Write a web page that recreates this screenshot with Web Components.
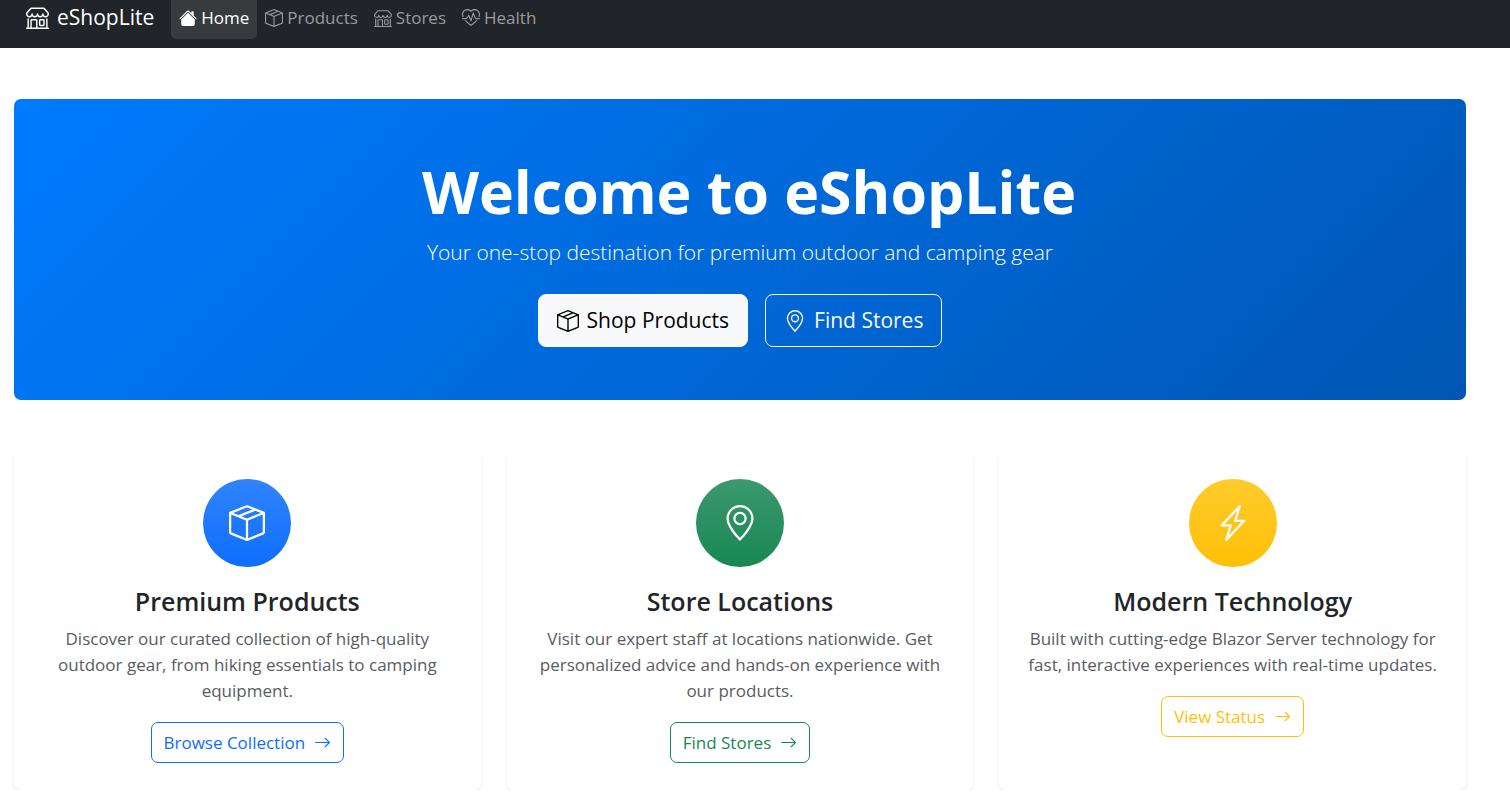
<!DOCTYPE html>
<html lang="en">
<head>
<meta charset="utf-8">
<meta name="viewport" content="width=device-width, initial-scale=1">
<title>eShopLite</title>
<style>
  body {
    margin: 0;
    background: #fff;
    color: #212529;
    font: 17px/26px "Open Sans", "Noto Sans", sans-serif;
  }
  main { padding: 51px 44px 0 14px; }
  .features {
    display: grid;
    grid-template-columns: repeat(auto-fit, minmax(320px, 1fr));
    gap: 26px;
    margin-top: 52px;
  }
</style>
</head>
<body>
<site-header>
  <nav-item href="#home" icon="house" active>Home</nav-item>
  <nav-item href="#products" icon="box">Products</nav-item>
  <nav-item href="#stores" icon="shop">Stores</nav-item>
  <nav-item href="#health" icon="pulse">Health</nav-item>
</site-header>
<main>
  <hero-banner>
    <span slot="title">Welcome to eShopLite</span>
    <span slot="lead">Your one-stop destination for premium outdoor and camping gear</span>
    <hero-button slot="actions" href="#products" icon="box" kind="solid">Shop Products</hero-button>
    <hero-button slot="actions" href="#stores" icon="pin">Find Stores</hero-button>
  </hero-banner>
  <section class="features">
    <feature-card icon="box" tone="primary" href="#products">
      <span slot="title">Premium Products</span>
      Discover our curated collection of high-quality outdoor gear, from hiking essentials to camping equipment.
      <span slot="action">Browse Collection</span>
    </feature-card>
    <feature-card icon="pin" tone="success" href="#stores">
      <span slot="title">Store Locations</span>
      Visit our expert staff at locations nationwide. Get personalized advice and hands-on experience with our products.
      <span slot="action">Find Stores</span>
    </feature-card>
    <feature-card icon="bolt" tone="warning" href="#health">
      <span slot="title">Modern Technology</span>
      Built with cutting-edge Blazor Server technology for fast, interactive experiences with real-time updates.
      <span slot="action">View Status</span>
    </feature-card>
  </section>
</main>
<script>
const ICONS = {
  house: ['M8.707 1.5a1 1 0 0 0-1.414 0L.646 8.146a.5.5 0 0 0 .708.708L8 2.207l6.646 6.647a.5.5 0 0 0 .708-.708L13 5.793V2.5a.5.5 0 0 0-.5-.5h-1a.5.5 0 0 0-.5.5v1.293z', 'm8 3.293 6 6V13.5a1.5 1.5 0 0 1-1.5 1.5h-9A1.5 1.5 0 0 1 2 13.5V9.293z'],
  box: ['M8.186 1.113a.5.5 0 0 0-.372 0L1.846 3.5l2.404.961L10.404 2zm3.564 1.426L5.596 5 8 5.961 14.154 3.5zm3.25 1.7-6.5 2.6v7.922l6.5-2.6V4.24zM7.5 14.762V6.838L1 4.239v7.923zM7.443.184a1.5 1.5 0 0 1 1.114 0l7.129 2.852A.5.5 0 0 1 16 3.5v8.662a1 1 0 0 1-.629.928l-7.185 2.874a.5.5 0 0 1-.372 0L.63 13.09a1 1 0 0 1-.63-.928V3.5a.5.5 0 0 1 .314-.464z'],
  shop: ['M2.97 1.35A1 1 0 0 1 3.73 1h8.54a1 1 0 0 1 .76.35l2.609 3.044A1.5 1.5 0 0 1 16 5.37v.255a2.375 2.375 0 0 1-4.25 1.458A2.37 2.37 0 0 1 9.875 8 2.37 2.37 0 0 1 8 7.083 2.37 2.37 0 0 1 6.125 8a2.37 2.37 0 0 1-1.875-.917A2.375 2.375 0 0 1 0 5.625V5.37a1.5 1.5 0 0 1 .361-.976zm1.78 4.275a1.375 1.375 0 0 0 2.75 0 .5.5 0 0 1 1 0 1.375 1.375 0 0 0 2.75 0 .5.5 0 0 1 1 0 1.375 1.375 0 1 0 2.75 0V5.37a.5.5 0 0 0-.12-.325L12.27 2H3.73L1.12 5.045A.5.5 0 0 0 1 5.37v.255a1.375 1.375 0 0 0 2.75 0 .5.5 0 0 1 1 0M1.5 8.5A.5.5 0 0 1 2 9v6h1v-5a1 1 0 0 1 1-1h3a1 1 0 0 1 1 1v5h6V9a.5.5 0 0 1 1 0v6h.5a.5.5 0 0 1 0 1H.5a.5.5 0 0 1 0-1H1V9a.5.5 0 0 1 .5-.5M4 15h3v-5H4zm5-5a1 1 0 0 1 1-1h2a1 1 0 0 1 1 1v3a1 1 0 0 1-1 1h-2a1 1 0 0 1-1-1zm3 0h-2v3h2z'],
  pulse: ['m8 2.748-.717-.737C5.6.281 2.514.878 1.4 3.053.918 3.995.78 5.323 1.508 7H.43c-2.128-5.697 4.165-8.83 7.394-5.857q.09.083.176.171a3 3 0 0 1 .176-.17c3.23-2.974 9.522.159 7.394 5.856h-1.078c.728-1.677.59-3.005.108-3.947C13.486.878 10.4.28 8.717 2.01zM2.212 10h1.315C4.593 11.183 6.05 12.458 8 13.795c1.949-1.337 3.407-2.612 4.473-3.795h1.315c-1.265 1.566-3.14 3.25-5.788 5-2.648-1.75-4.523-3.434-5.788-5', 'M10.464 3.314a.5.5 0 0 0-.945.049L7.921 8.956 6.464 5.314a.5.5 0 0 0-.88-.091L3.732 8H.5a.5.5 0 0 0 0 1H4a.5.5 0 0 0 .416-.223l1.473-2.209 1.647 4.118a.5.5 0 0 0 .945-.049l1.598-5.593 1.457 3.642A.5.5 0 0 0 12 9h3.5a.5.5 0 0 0 0-1h-3.162z'],
  pin: ['M12.166 8.94c-.524 1.062-1.234 2.12-1.96 3.07A32 32 0 0 1 8 14.58a32 32 0 0 1-2.206-2.57c-.726-.95-1.436-2.008-1.96-3.07C3.304 7.867 3 6.862 3 6a5 5 0 0 1 10 0c0 .862-.305 1.867-.834 2.94M8 16s6-5.686 6-10A6 6 0 0 0 2 6c0 4.314 6 10 6 10', 'M8 8a2 2 0 1 1 0-4 2 2 0 0 1 0 4m0 1a3 3 0 1 0 0-6 3 3 0 0 0 0 6'],
  bolt: ['M11.251.068a.5.5 0 0 1 .227.58L9.677 6.5H13a.5.5 0 0 1 .364.843l-8 8.5a.5.5 0 0 1-.842-.49L6.323 9.5H3a.5.5 0 0 1-.364-.843l8-8.5a.5.5 0 0 1 .615-.09zM4.157 8.5H7a.5.5 0 0 1 .478.647L6.11 13.59l5.732-6.09H9a.5.5 0 0 1-.478-.647L9.89 2.41z'],
  arrow: ['M1 8a.5.5 0 0 1 .5-.5h11.793l-3.147-3.146a.5.5 0 0 1 .708-.708l4 4a.5.5 0 0 1 0 .708l-4 4a.5.5 0 0 1-.708-.708L13.293 8.5H1.5A.5.5 0 0 1 1 8'],
};

/* Shared base: fills an open shadow root from the class's markup. */
class Part extends HTMLElement {
  connectedCallback() {
    if (this.shadowRoot) return;
    this.attachShadow({ mode: 'open' }).innerHTML = this.markup();
  }
  attr(name) { return this.getAttribute(name) || ''; }
}

customElements.define('ui-icon', class extends Part {
  markup() {
    const shapes = (ICONS[this.attr('name')] || []).map(d => `<path d="${d}"/>`).join('');
    return `<style>
      :host { display: block; flex: none; width: var(--icon-size, 18px); height: var(--icon-size, 18px); }
      svg { display: block; width: 100%; height: 100%; }
    </style><svg viewBox="0 0 16 16" fill="currentColor" fill-rule="evenodd" aria-hidden="true">${shapes}</svg>`;
  }
});

customElements.define('site-header', class extends Part {
  markup() {
    return `<style>
      :host { display: block; background: #212529; }
      nav { display: flex; flex-wrap: wrap; padding: 0 26px 9px; }
      .brand { display: flex; align-items: center; gap: 8px; margin-right: 17px; padding-bottom: 5px;
        color: #fff; font-size: 21px; text-decoration: none; --icon-size: 23px; }
      .links { display: flex; flex-wrap: wrap; }
    </style>
    <nav aria-label="Main"><a class="brand" href="#home"><ui-icon name="shop"></ui-icon><span>eShopLite</span></a>
    <div class="links"><slot></slot></div></nav>`;
  }
});

customElements.define('nav-item', class extends Part {
  markup() {
    return `<style>
      :host { display: block; color: #999b9d; }
      :host([active]) { color: #fff; background: #373b3e; border-radius: 0 0 5px 5px; }
      a { display: flex; align-items: center; gap: 4px; padding: 5px 8px 8px; color: inherit; text-decoration: none; }
    </style>
    <a href="${this.attr('href')}"><ui-icon name="${this.attr('icon')}"></ui-icon><span><slot></slot></span></a>`;
  }
});

customElements.define('hero-banner', class extends Part {
  markup() {
    return `<style>
      :host { display: block; padding: 53px; border-radius: 7px; color: #fff; text-align: center;
        background: linear-gradient(135deg, #007bff 0%, #0056b3 100%); }
      h1 { margin: 0 0 7px; padding-left: 18px; font-size: 59px; line-height: 79px; font-weight: 700; }
      p { margin: 0 0 28px; font-size: 21px; line-height: 28px; font-weight: 300; }
      .actions { display: flex; flex-wrap: wrap; justify-content: center; gap: 17px; }
    </style>
    <h1><slot name="title"></slot></h1><p><slot name="lead"></slot></p>
    <div class="actions"><slot name="actions"></slot></div>`;
  }
});

customElements.define('hero-button', class extends Part {
  markup() {
    return `<style>
      :host { display: block; --icon-size: 22px; }
      a { display: flex; align-items: center; gap: 8px; padding: 11px 18px; border: 1px solid #f8f9fa; border-radius: 8px;
        color: #f8f9fa; font-size: 21px; line-height: 29px; text-decoration: none; }
      :host([kind="solid"]) a { background: #f8f9fa; color: #000; }
    </style>
    <a href="${this.attr('href')}"><ui-icon name="${this.attr('icon')}"></ui-icon><span><slot></slot></span></a>`;
  }
});

customElements.define('feature-card', class extends Part {
  markup() {
    return `<style>
      :host { display: flex; flex-direction: column; align-items: center; padding: 27px 26px; border-radius: 7px;
        background: #fff; box-shadow: 0 2px 4px rgba(0, 0, 0, .075); text-align: center; --tone: #0d6efd; }
      :host([tone="success"]) { --tone: #198754; }
      :host([tone="warning"]) { --tone: #ffc107; }
      .badge { display: grid; place-items: center; width: 88px; height: 88px; border-radius: 50%; color: #fff; --icon-size: 36px;
        background: linear-gradient(180deg, rgba(255, 255, 255, .15), rgba(255, 255, 255, 0)) var(--tone); }
      h3 { margin: 18px 0 9px; font-size: 25px; line-height: 32px; font-weight: 600; }
      p { margin: 0 0 18px; color: #595c5f; }
      a { display: flex; align-items: center; gap: 9px; padding: 6px 12px; border: 1px solid var(--tone); border-radius: 7px;
        color: var(--tone); line-height: 27px; text-decoration: none; --icon-size: 17px; }
    </style>
    <div class="badge"><ui-icon name="${this.attr('icon')}"></ui-icon></div>
    <h3><slot name="title"></slot></h3>
    <p><slot></slot></p>
    <a href="${this.attr('href')}"><slot name="action"></slot><ui-icon name="arrow"></ui-icon></a>`;
  }
});
</script>
</body>
</html>
